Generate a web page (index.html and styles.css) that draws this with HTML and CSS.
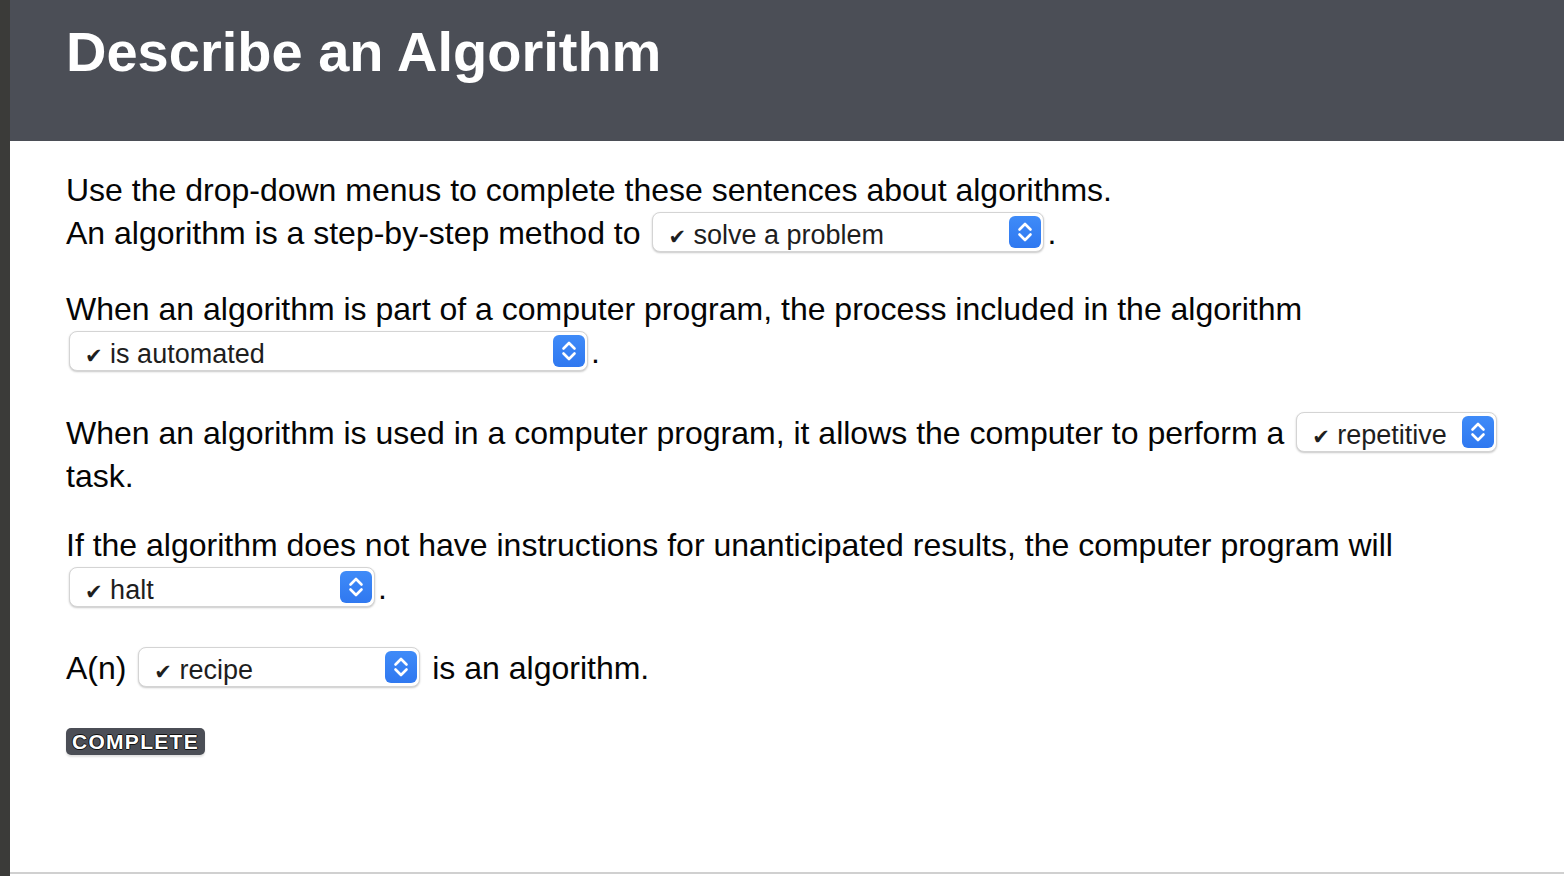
FILE: index.html
```html
<!DOCTYPE html>
<html lang="en">
<head>
<meta charset="utf-8">
<title>Describe an Algorithm</title>
<link rel="stylesheet" href="styles.css">
</head>
<body>
<div class="page">
  <div class="strip"></div>
  <div class="main">
    <header class="header">
      <h1 class="title">Describe an Algorithm</h1>
    </header>
    <section class="content">
      <p class="para para-1">Use the drop-down menus to complete these sentences about algorithms.<br>An algorithm is a step-by-step method to <span class="select sel-392"><span class="check">&#10004;</span> solve a problem<span class="stepper"><svg viewBox="0 0 32 32" width="32" height="32"><path d="M10.5 13.5 L16 8 L21.5 13.5 M10.5 18.5 L16 24 L21.5 18.5" fill="none" stroke="#fff" stroke-width="2.6" stroke-linecap="round" stroke-linejoin="round"/></svg></span></span>.</p>
      <p class="para para-2">When an algorithm is part of a computer program, the process included in the algorithm <span class="select sel-519"><span class="check">&#10004;</span> is automated<span class="stepper"><svg viewBox="0 0 32 32" width="32" height="32"><path d="M10.5 13.5 L16 8 L21.5 13.5 M10.5 18.5 L16 24 L21.5 18.5" fill="none" stroke="#fff" stroke-width="2.6" stroke-linecap="round" stroke-linejoin="round"/></svg></span></span>.</p>
      <p class="para para-3">When an algorithm is used in a computer program, it allows the computer to perform a <span class="select sel-201"><span class="check">&#10004;</span> repetitive<span class="stepper"><svg viewBox="0 0 32 32" width="32" height="32"><path d="M10.5 13.5 L16 8 L21.5 13.5 M10.5 18.5 L16 24 L21.5 18.5" fill="none" stroke="#fff" stroke-width="2.6" stroke-linecap="round" stroke-linejoin="round"/></svg></span></span> task.</p>
      <p class="para para-4">If the algorithm does not have instructions for unanticipated results, the computer program will <span class="select sel-306"><span class="check">&#10004;</span> halt<span class="stepper"><svg viewBox="0 0 32 32" width="32" height="32"><path d="M10.5 13.5 L16 8 L21.5 13.5 M10.5 18.5 L16 24 L21.5 18.5" fill="none" stroke="#fff" stroke-width="2.6" stroke-linecap="round" stroke-linejoin="round"/></svg></span></span>.</p>
      <p class="para para-5">A(n) <span class="select sel-282"><span class="check">&#10004;</span> recipe<span class="stepper"><svg viewBox="0 0 32 32" width="32" height="32"><path d="M10.5 13.5 L16 8 L21.5 13.5 M10.5 18.5 L16 24 L21.5 18.5" fill="none" stroke="#fff" stroke-width="2.6" stroke-linecap="round" stroke-linejoin="round"/></svg></span></span> is an algorithm.</p>
      <button class="complete" type="button">COMPLETE</button>
    </section>
  </div>
</div>
</body>
</html>
```
FILE: styles.css
```css
html, body {
  margin: 0;
  padding: 0;
  background: #ffffff;
}

.page {
  display: flex;
  height: 876px;
  overflow: hidden;
}

.strip {
  width: 10px;
  flex: 0 0 10px;
  background: #3b3b39;
}

.main {
  flex: 1;
  display: flex;
  flex-direction: column;
  height: 874px;
}

.header {
  height: 141px;
  flex: 0 0 141px;
  box-sizing: border-box;
  background: #4b4e56;
  padding: 20px 56px 0;
}

.title {
  margin: 0;
  font-family: "Liberation Sans", Arial, sans-serif;
  font-weight: 700;
  font-size: 56px;
  line-height: 64px;
  color: #ffffff;
}

.content {
  flex: 1;
  padding: 28px 56px 0;
  border-bottom: 2px solid #d0d0d0;
  font-family: "Liberation Sans", Arial, sans-serif;
  font-size: 32px;
  line-height: 43px;
  color: #050505;
}

.para {
  margin: 0;
}

.para-2 { margin-top: 33px; }
.para-3 { margin-top: 38px; }
.para-4 { margin-top: 26px; }
.para-5 { margin-top: 37px; }

.select {
  display: inline-block;
  position: relative;
  box-sizing: border-box;
  height: 40px;
  margin: 0 3px;
  padding: 6px 0 0 15px;
  vertical-align: baseline;
  border: 1px solid #d4d4d4;
  border-radius: 8px;
  background: #ffffff;
  box-shadow: 0 1px 2px rgba(0, 0, 0, 0.22);
  font-family: "Liberation Sans", Arial, sans-serif;
  font-size: 27px;
  line-height: 32px;
  color: #1e1e1e;
  white-space: nowrap;
}

.sel-392 { width: 392px; }
.sel-519 { width: 519px; }
.sel-201 { width: 201px; }
.sel-306 { width: 306px; }
.sel-282 { width: 282px; }

.check {
  font-family: "DejaVu Sans", sans-serif;
  font-size: 21px;
  line-height: 20px;
  color: #1e1e1e;
}

.stepper {
  position: absolute;
  top: 3px;
  right: 2px;
  width: 32px;
  height: 32px;
  border-radius: 6px;
  background: linear-gradient(#3f8bf8, #2f78f0);
}

.stepper svg {
  display: block;
}

.complete {
  display: block;
  margin-top: 38px;
  width: 139px;
  height: 27px;
  padding: 0;
  border: none;
  border-radius: 5px;
  background: #4b4e56;
  box-shadow: 0 2px 2px rgba(0, 0, 0, 0.12);
  font-family: "Liberation Sans", Arial, sans-serif;
  font-weight: 700;
  font-size: 21px;
  letter-spacing: 1.3px;
  line-height: 27px;
  color: #ffffff;
  text-shadow: 1px 0 0 #111, -1px 0 0 #111, 0 1px 0 #111, 0 -1px 0 #111;
}
```
